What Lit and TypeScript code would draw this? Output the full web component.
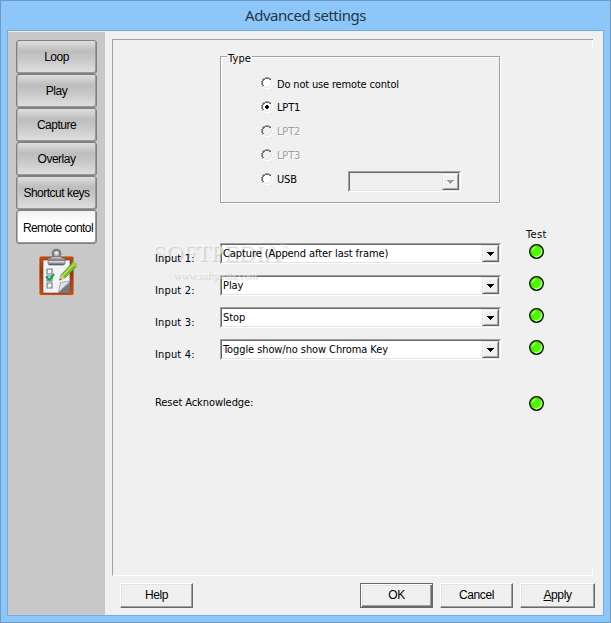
import { LitElement, html, css, svg } from "lit";
import { customElement, property } from "lit/decorators.js";
import { classMap } from "lit/directives/class-map.js";

const PAGES = ["Loop", "Play", "Capture", "Overlay", "Shortcut keys", "Remote contol"];
const TYPES = [
  { label: "Do not use remote contol" },
  { label: "LPT1", checked: true },
  { label: "LPT2", disabled: true },
  { label: "LPT3", disabled: true },
  { label: "USB" },
];
const INPUTS = ["Capture (Append after last frame)", "Play", "Stop", "Toggle show/no show Chroma Key"];

@customElement("combo-box")
class ComboBox extends LitElement {
  @property() value = "";
  @property({ type: Boolean, reflect: true }) disabled = false;
  static styles = css`
    :host { display: block; box-sizing: border-box; height: 21px; border: 1px solid; border-color: #a0a0a0 #fff #fff #a0a0a0; }
    .inner { box-sizing: border-box; height: 19px; display: flex; border: 1px solid; border-color: #696969 #e3e3e3 #e3e3e3 #696969; background: #fff; }
    .value { flex: 1; position: relative; z-index: 1; white-space: pre; padding-left: 1px; line-height: 18px; }
    .drop { box-sizing: border-box; width: 17px; height: 17px; border: 1px solid; border-color: #e3e3e3 #696969 #696969 #e3e3e3; background: #f0f0f0; }
    .face { box-sizing: border-box; width: 15px; height: 15px; border: 1px solid; border-color: #fff #a0a0a0 #a0a0a0 #fff; }
    svg { display: block; width: 13px; height: 13px; fill: #000; }
    :host([disabled]) .inner { background: #f0f0f0; }
    :host([disabled]) svg { fill: #a0a0a0; }
  `;
  render() {
    return html`<div class="inner"><span class="value">${this.value}</span>
      <div class="drop"><div class="face"><svg viewBox="0 0 13 13" shape-rendering="crispEdges">
        ${this.disabled ? svg`<path fill="#fff" d="M4 6h7v1h-1v1h-1v1h-1v1h-1v-1h-1v-1h-1v-1h-1z"/>` : ""}
        <path d="M3 5h7v1h-1v1h-1v1h-1v1h-1v-1h-1v-1h-1v-1h-1z"/></svg></div></div></div>`;
  }
}

@customElement("radio-option")
class RadioOption extends LitElement {
  @property() label = "";
  @property({ type: Boolean }) checked = false;
  @property({ type: Boolean }) disabled = false;
  static styles = css`
    :host { display: flex; height: 24px; align-items: flex-start; }
    svg { width: 12px; height: 12px; flex: none; margin: 1px 4px 0 0; }
    span { line-height: 16px; white-space: pre; letter-spacing: -0.17px; }
    :host(.first) span { padding-top: 1px; }
    .off { color: #a0a0a0; text-shadow: 1px 1px #fff; }
  `;
  render() {
    return html`<svg viewBox="0 0 12 12" fill="none" shape-rendering="crispEdges">
        <path fill=${this.disabled ? "#f0f0f0" : "#fff"} d="M4 2h4v1h1v1h1v4h-1v1h-1v1h-4v-1h-1v-1h-1v-4h1v-1h1z"/>
        <path fill="#a0a0a0" d="M4 0h4v1h2v1h-2v-1h-4v1h-2v2h-1v4h1v2h-1v-2h-1v-4h1v-2h1v-1h2z"/>
        <path fill="#696969" d="M4 1h4v1h2v1h-2v-1h-4v1h-1v1h-1v4h1v1h-1v-1h-1v-4h1v-2h2z"/>
        <path fill="#e3e3e3" d="M9 3h1v1h1v4h-1v2h-2v1h-4v-1h-1v-1h1v1h4v-1h1v-1h1v-4h-1z"/>
        <path fill="#fff" d="M10 2h1v2h1v4h-1v2h-1v1h-2v1h-4v-1h-2v-1h2v1h4v-1h2v-2h1v-4h-1z"/>
        ${this.checked ? svg`<path fill="#000" d="M5 4h2v1h1v2h-1v1h-2v-1h-1v-2h1z"/>` : ""}
      </svg><span class=${classMap({ off: this.disabled })}>${this.label}</span>`;
  }
}

@customElement("app-root")
class AppRoot extends LitElement {
  static styles = css`
    :host { display: block; box-sizing: border-box; width: 611px; height: 623px; overflow: hidden; background: #8dc7fa; border: 1px solid #6d99c3; color: #000; font: 11px "DejaVu Sans Condensed", "DejaVu Sans", sans-serif; font-stretch: condensed; letter-spacing: -0.09px; }
    .title { height: 29px; line-height: 29px; text-align: center; font-family: "Noto Sans", sans-serif; font-stretch: normal; font-size: 15px; letter-spacing: -0.48px; color: #253545; }
    .client { position: relative; box-sizing: border-box; margin: 0 6px; height: 586px; border: 1px solid #76abdf; background: #f0f0f0; display: flex; }
    .side { width: 97px; background: #c8c8c8; border-top: 1px solid #f0f0f0; box-sizing: border-box; padding: 8px 0 0 8px; flex: none; }
    .tab { box-sizing: border-box; display: block; width: 81px; height: 34px; padding: 0; text-align: center; border: 1px solid #808080; border-radius: 3px; background: linear-gradient(#dedede 0, #d2d2d2 12%, #bdbdbd 32%, #c7c7c7 55%, #e0e0e0 100%); box-shadow: inset -1px -1px #999, inset 1px 0 #b4b4b4; font: 12px/32px "Liberation Sans", sans-serif; letter-spacing: -0.5px; white-space: nowrap; color: #000; }
    .tab.on { background: linear-gradient(#f0f0f0, #fff 35%, #fff); padding: 2px 0 0 3px; line-height: 30px; letter-spacing: -0.55px; }
    .clip { display: block; width: 40px; height: 49px; margin: 4px 0 0 22px; }
    .main { flex: 1; display: flex; flex-direction: column; }
    .panel { position: relative; box-sizing: border-box; margin: 8px 10px 0 7px; height: 537px; border-left: 1px solid #a0a0a0; border-top: 1px solid #a0a0a0; border-bottom: 1px solid #fff; }
    .edge { position: absolute; right: 0; width: 1px; height: 8px; background: #fff; }
    .edge.t { top: 0; } .edge.b { bottom: 0; }
    .group { position: relative; box-sizing: border-box; width: 280px; height: 147px; margin: 16px 0 0 107px; border: 1px solid #a0a0a0; box-shadow: 1px 1px #fff, inset 1px 1px #fff; padding: 19px 0 0 40px; }
    .legend { position: absolute; left: 6px; top: -6px; line-height: 15px; padding: 0 1px; background: #f0f0f0; letter-spacing: 0.1px; }
    .usb { display: flex; }
    .usb radio-option { width: 87px; }
    .usb combo-box { width: 113px; margin-top: -1px; }
    .test { margin: 24px 0 0 413px; height: 15px; line-height: 16px; letter-spacing: 0.4px; }
    .row { display: grid; grid-template-columns: 65px 281px 28px 15px; height: 32px; margin-left: 42px; align-items: start; }
    .row span { position: relative; z-index: 1; line-height: 16px; padding-top: 9px; letter-spacing: 0.15px; }
    .row combo-box { margin-top: 1px; }
    .led { grid-column: 4; display: block; width: 15px; height: 15px; margin-top: 2px; }
    .row.reset { margin-top: 24px; }
    .row.reset span { grid-column: 1 / 3; padding-top: 1px; letter-spacing: -0.08px; }
    .buttons { display: flex; margin: 7px 0 0 15px; gap: 7px; }
    .btn { box-sizing: border-box; width: 73px; height: 25px; padding: 0; border: 1px solid; border-color: #fff #696969 #696969 #fff; box-shadow: inset -1px -1px #a0a0a0, inset 1px 1px #e3e3e3; background: #f0f0f0; font: 12px/21px "Liberation Sans", sans-serif; letter-spacing: -0.4px; color: #000; }
    .btn.help { margin-right: 160px; }
    .btn.ok { border-color: #696969; box-shadow: inset 1px 1px #fff, inset -1px -1px #696969, inset -2px -2px #a0a0a0, inset 2px 2px #e3e3e3; }
    .btn.apply { width: 75px; }
    .mark { position: absolute; left: 145px; top: 208px; width: 140px; color: rgba(225,225,225,.42); text-shadow: -1px -1px rgba(255,255,255,.6), 1px 1px rgba(160,160,160,.36); font-family: "Liberation Serif", serif; pointer-events: none; }
    .brand { display: block; font-size: 24px; line-height: 28px; letter-spacing: -0.15px; white-space: nowrap; }
    .brand sup { font-size: 7px; line-height: 0; vertical-align: 11px; letter-spacing: 0; }
    .site { display: block; font-size: 11px; line-height: 14px; letter-spacing: -.2px; margin: 1px 0 0 20px; }
  `;

  led() {
    return html`<svg class="led" viewBox="0 0 15 15">
      <circle cx="7.5" cy="7.5" r="6.8" fill="#54f800" stroke="#000" stroke-width="1.3"/>
      <path d="M2.9 10.5A5.4 5.4 0 0 1 10.500 2.900" fill="none" stroke="#2d9c00" stroke-width="1"/>
      <path d="M3.5 6A5 5 0 0 1 6.300 3.300" fill="none" stroke="#e5ffd8" stroke-width="1.1"/>
      <path d="M12.2 5A5.4 5.4 0 0 1 6 12.500" fill="none" stroke="#c2f7aa" stroke-width="1.1"/>
    </svg>`;
  }

  clipboard() {
    return html`<svg class="clip" viewBox="0 0 40 49">
      <defs>
        <linearGradient id="wood" x2="0" y2="1"><stop stop-color="#b9511f"/><stop offset=".4" stop-color="#983610"/><stop offset="1" stop-color="#bd5320"/></linearGradient>
        <linearGradient id="metal" x2="0" y2="1"><stop stop-color="#ddd"/><stop offset=".45" stop-color="#777"/><stop offset=".6" stop-color="#ddd"/><stop offset="1" stop-color="#4c4c4c"/></linearGradient>
      </defs>
      <rect x="1" y="8" width="35" height="39.500" rx="2" fill="url(#wood)" stroke="#e5c8b5" stroke-width=".8"/>
      <path d="M5 12H32V45H5Z" fill="#f1f3f7" stroke="#7b3215" stroke-width=".6"/>
      <path d="M32 34V45H20Z" fill="#777"/>
      <path d="M20.5 44.5L22.5 34.5 32 33Z" fill="#dfe2e5" stroke="#8c8c8c" stroke-width=".7"/>
      <g fill="none" stroke="#777c82" stroke-width="1.2"><path d="M9 21h5v5H9zM9 28h5v5H9zM9 35h5v5H9z"/></g>
      <path d="M8 28.5L11.5 32 16 26" fill="none" stroke="#13a24a" stroke-width="2.1"/>
      <circle cx="18.500" cy="5.500" r="3.800" fill="#bbb" stroke="#777" stroke-width="2"/>
      <circle cx="18.500" cy="5" r="1.500" fill="#eee"/>
      <path d="M14 8.500H23L24 10H27V15Q27 17 25 17H12Q10 17 10 15V10H13Z" fill="url(#metal)" stroke="#666" stroke-width=".7"/>
      <path d="M23 27L35 14 39 18 27 30 21.500 32Z" fill="#79b72b" stroke="#52821c" stroke-width=".6"/>
      <path d="M24.500 28L36.500 15.500" stroke="#b8df62" stroke-width="1.6"/>
      <path d="M23 27L27 30 21.500 32.500Z" fill="#edc798"/><path d="M21.500 32.500L22.200 30.200 23.800 31.500Z" fill="#218c43"/>
      <path d="M34 15L36 13 40 17 38 19Z" fill="#9bcf51"/>
    </svg>`;
  }

  render() {
    return html`
      <div class="title">Advanced settings</div>
      <div class="client">
        <div class="side">
          ${PAGES.map((p, i) => html`<button class=${classMap({ tab: true, on: i === 5 })}>${p}</button>`)}
          ${this.clipboard()}
        </div>
        <div class="main">
          <div class="panel">
            <i class="edge t"></i><i class="edge b"></i>
            <div class="group">
              <span class="legend">Type</span>
              ${TYPES.slice(0, 4).map((t, i) => html`<radio-option class=${classMap({ first: i === 0 })} .label=${t.label} .checked=${!!t.checked} .disabled=${!!t.disabled}></radio-option>`)}
              <div class="usb"><radio-option .label=${TYPES[4].label}></radio-option><combo-box disabled></combo-box></div>
            </div>
            <div class="test">Test</div>
            ${INPUTS.map((v, i) => html`<div class="row"><span>Input ${i + 1}:</span><combo-box .value=${v}></combo-box>${this.led()}</div>`)}
            <div class="row reset"><span>Reset Acknowledge:</span>${this.led()}</div>
          </div>
          <div class="buttons">
            <button class="btn help">Help</button>
            <button class="btn ok">OK</button>
            <button class="btn">Cancel</button>
            <button class="btn apply"><u>A</u>pply</button>
          </div>
        </div>
        <div class="mark"><span class="brand">SOFTPEDIA<sup>™</sup></span><span class="site">www.softpedia.com</span></div>
      </div>`;
  }
}
